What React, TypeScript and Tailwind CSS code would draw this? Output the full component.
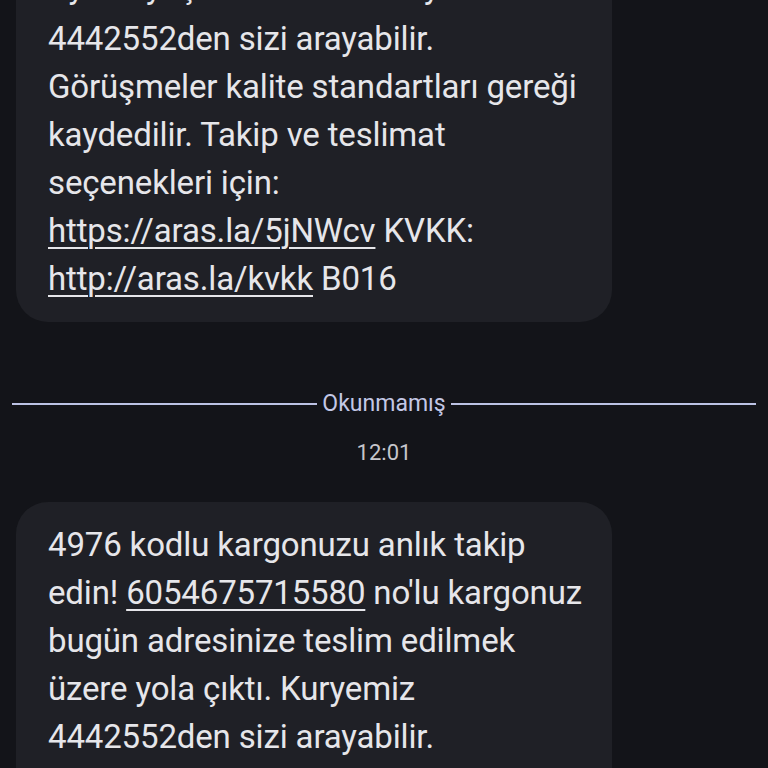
import React from 'react'

const font = { fontFamily: 'Roboto, "Noto Sans", sans-serif' }

function Line({ className, children }: { className?: string; children: React.ReactNode }) {
  return <div className={`whitespace-nowrap ${className ?? ''}`}>{children}</div>
}

function Link({ children }: { children: React.ReactNode }) {
  return (
    <span className="underline decoration-2 underline-offset-[5px]">{children}</span>
  )
}

function Bubble({ className, children }: { className?: string; children: React.ReactNode }) {
  return (
    <div
      className={`w-[596px] rounded-[32px] bg-[#1f2026] px-8 text-[33px] leading-[48px] tracking-[-0.15px] text-[#e6e6ea] ${className ?? ''}`}
    >
      {children}
    </div>
  )
}

export default function App() {
  return (
    <div className="h-[768px] w-[768px] overflow-hidden bg-[#131419]" style={font}>
      <div className="px-4">
        <Bubble className="-mt-[59px] pt-[18px] pb-[19px]">
          <Line className="leading-[56px]">Ayrıca yaşanan durum kuryemiz</Line>
          <Line>4442552den sizi arayabilir.</Line>
          <Line>Görüşmeler kalite standartları gereği</Line>
          <Line>kaydedilir. Takip ve teslimat</Line>
          <Line>seçenekleri için:</Line>
          <Line>
            <Link>https://aras.la/5jNWcv</Link> KVKK:
          </Line>
          <Line>
            <Link>http://aras.la/kvkk</Link> B016
          </Line>
        </Bubble>
      </div>

      <div className="mt-[70px] flex items-center gap-[5px] px-3">
        <div className="h-[2px] flex-1 bg-[#bcc2e4]" />
        <span className="text-[23px] leading-6 text-[#c3c8e6]">Okunmamış</span>
        <div className="h-[2px] flex-1 bg-[#bcc2e4]" />
      </div>

      <div className="mt-[25px] text-center text-[22px] leading-6 text-[#c6c6cc]">12:01</div>

      <div className="mt-[37px] px-4">
        <Bubble className="pt-[19px] pb-[18px]">
          <Line>4976 kodlu kargonuzu anlık takip</Line>
          <Line>
            edin! <Link>6054675715580</Link> no'lu kargonuz
          </Line>
          <Line>bugün adresinize teslim edilmek</Line>
          <Line>üzere yola çıktı. Kuryemiz</Line>
          <Line>4442552den sizi arayabilir.</Line>
          <Line>Görüşmeler kalite standartları gereği</Line>
        </Bubble>
      </div>
    </div>
  )
}
